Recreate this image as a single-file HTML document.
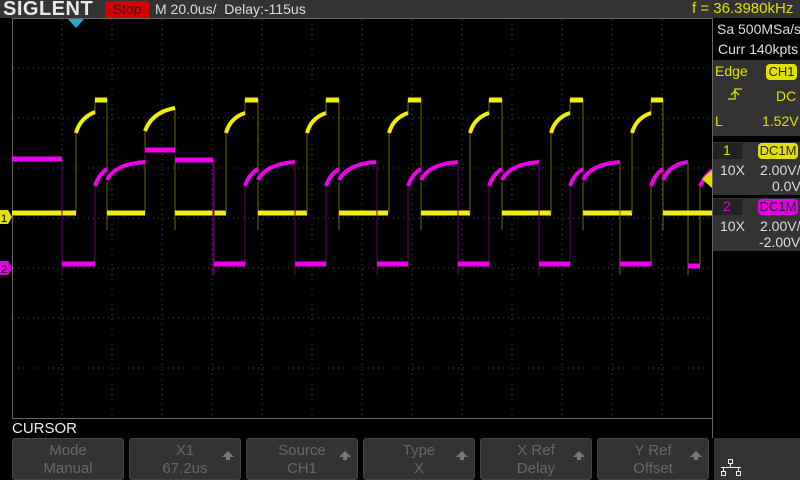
<!DOCTYPE html>
<html><head><meta charset="utf-8"><style>
body{margin:0;width:800px;height:480px;background:#000;overflow:hidden;position:relative;font-family:"Liberation Sans",sans-serif}
.a{position:absolute;white-space:nowrap}
.btn{position:absolute;top:438px;width:112px;height:42px;background:#333;border:1px solid #444;border-radius:3px;box-sizing:border-box;color:#666;font-size:15px;text-align:center;line-height:18px;padding-top:3px}
.up{position:absolute;right:6px;top:12px;width:0;height:0;border-left:6px solid transparent;border-right:6px solid transparent;border-bottom:6px solid #777}
.up:after{content:"";position:absolute;left:-2px;top:5px;width:4px;height:4px;background:#777}
</style></head><body>
<div class="a" style="left:0;top:0;width:800px;height:18px;background:#333"></div>
<div class="a" style="left:3px;top:-2px;font-size:20px;font-weight:bold;color:#e8e8e8;letter-spacing:0.5px">SIGLENT</div>
<div class="a" style="left:105px;top:1px;width:44px;height:17px;background:#d20000;color:#222;font-size:14px;text-align:center;line-height:17px">Stop</div>
<div class="a" style="left:155px;top:0;font-size:14px;color:#ddd;line-height:18px">M 20.0us/&nbsp; Delay:-115us</div>
<div class="a" style="left:692px;top:0;font-size:15px;color:#e0e000;line-height:18px">f = 36.3980kHz</div>

<svg class="a" style="left:0;top:0" width="800" height="480">
<defs>
<g id="cyc" fill="none">
<path d="M0,213V133M19,113V99M32,99V230" stroke="#6a6a00" stroke-width="1"/>
<path d="M0,133Q4,118 19,113" stroke="#f0f000" stroke-width="4"/>
<path d="M19,100H32" stroke="#f0f000" stroke-width="5"/>
<path d="M32,213H81" stroke="#f0f000" stroke-width="5"/>
<path d="M-12,162V275M19,264V184M32,169V182" stroke="#6a006a" stroke-width="1"/>
<path d="M-12,264H19" stroke="#ee00ee" stroke-width="5"/>
<path d="M19,186Q23,174 32,169" stroke="#ee00ee" stroke-width="4"/>
<path d="M32,180Q40,164 69,162" stroke="#ee00ee" stroke-width="4"/>
</g>
</defs>
<g stroke="#4a4a4a" stroke-dasharray="1 4">
<path d="M62,19V418M112,19V418M162,19V418M212,19V418M262,19V418M312,19V418M362,19V418M412,19V418M462,19V418M512,19V418M562,19V418M612,19V418M662,19V418"/>
<path d="M13,68H712M13,118H712M13,168H712M13,218H712M13,268H712M13,318H712M13,368H712"/>
</g>
<rect x="12.5" y="18.5" width="700" height="400" fill="none" stroke="#666"/>
<g fill="none">
<path d="M76,213V133M95,112V99M107,99V230M145,213V131M175,108V230" stroke="#6a6a00"/>
<path d="M12,213H76M107,213H145M175,213H226" stroke="#f0f000" stroke-width="5"/>
<path d="M76,133Q80,118 95,112M145,131Q152,112 175,108" stroke="#f0f000" stroke-width="4"/>
<path d="M95,100H107" stroke="#f0f000" stroke-width="5"/>
<path d="M62,159V275M95,264V184M107,169V182M145,162V148M175,150V162M213,160V275" stroke="#6a006a"/>
<path d="M12,159H62M62,264H95M145,150H175M175,160H213" stroke="#ee00ee" stroke-width="5"/>
<path d="M95,186Q99,174 107,169M107,180Q115,164 145,162" stroke="#ee00ee" stroke-width="4"/>
</g>
<use href="#cyc" x="226"/><use href="#cyc" x="307"/><use href="#cyc" x="389"/><use href="#cyc" x="470"/><use href="#cyc" x="551"/>
<g fill="none">
<path d="M632,213V133M651,113V99M663,99V230M620,162V275M651,264V184M663,169V182M688,162V275M700,264V184" stroke="#6a6a00"/>
<path d="M632,133Q636,118 651,113" stroke="#f0f000" stroke-width="4"/>
<path d="M651,100H663M663,213H712" stroke="#f0f000" stroke-width="5"/>
<path d="M620,264H651M688,266H700" stroke="#ee00ee" stroke-width="5"/>
<path d="M651,186Q655,174 663,169M663,180Q670,164 688,162M700,186Q705,176 712,170" stroke="#ee00ee" stroke-width="4"/>
</g>
<path d="M68,19H84L76,28Z" fill="#1fa8d8"/>
<path d="M0,210H8L12,217L8,224H0Z" fill="#e0e000"/>
<text x="1" y="222" font-size="11" fill="#000" font-family="Liberation Sans">1</text>
<path d="M0,261H8L12,268L8,275H0Z" fill="#e000e0"/>
<text x="1" y="273" font-size="11" fill="#000" font-family="Liberation Sans">2</text>
<path d="M712,170V188L702,179Z" fill="#e0e000"/>
</svg>

<div class="a" style="left:712px;top:19px;width:88px;height:41px;background:#000;border-left:1px solid #666"></div>
<div class="a" style="left:717px;top:21px;font-size:14px;color:#ddd">Sa 500MSa/s</div>
<div class="a" style="left:718px;top:41px;font-size:14px;color:#ddd">Curr 140kpts</div>
<div class="a" style="left:712px;top:60px;width:88px;height:76px;background:#333;border-left:1px solid #666"></div>
<div class="a" style="left:715px;top:63px;font-size:14px;color:#e0e000">Edge</div>
<div class="a" style="left:766px;top:64px;width:31px;height:16px;background:#e0e000;border-radius:4px;color:#222;font-size:13px;text-align:center;line-height:16px">CH1</div>
<svg class="a" style="left:727px;top:86px" width="16" height="16"><path d="M1,13H8V3H15M4,9L8,5L12,9" stroke="#e0e000" stroke-width="1.3" fill="none"/></svg>
<div class="a" style="left:776px;top:88px;font-size:14px;color:#e0e000">DC</div>
<div class="a" style="left:715px;top:113px;font-size:14px;color:#e0e000">L</div>
<div class="a" style="left:762px;top:113px;font-size:14px;color:#e0e000">1.52V</div>
<div class="a" style="left:712px;top:142px;width:88px;height:53px;background:#333;border-left:1px solid #666"></div>
<div class="a" style="left:713px;top:143px;width:29px;height:16px;background:#222"></div>
<div class="a" style="left:723px;top:142px;font-size:14px;color:#e0e000">1</div>
<div class="a" style="left:758px;top:143px;width:40px;height:16px;background:#e0e000;border-radius:4px;color:#222;font-size:13px;text-align:center;line-height:16px">DC1M</div>
<div class="a" style="left:720px;top:162px;font-size:14px;color:#ddd">10X</div>
<div class="a" style="left:760px;top:162px;font-size:14px;color:#ddd">2.00V/</div>
<div class="a" style="left:772px;top:178px;font-size:14px;color:#ddd">0.0V</div>
<div class="a" style="left:712px;top:198px;width:88px;height:53px;background:#333;border-left:1px solid #666"></div>
<div class="a" style="left:713px;top:199px;width:29px;height:16px;background:#222"></div>
<div class="a" style="left:723px;top:198px;font-size:14px;color:#e000e0">2</div>
<div class="a" style="left:758px;top:199px;width:40px;height:16px;background:#e000e0;border-radius:4px;color:#222;font-size:13px;text-align:center;line-height:16px">DC1M</div>
<div class="a" style="left:720px;top:218px;font-size:14px;color:#ddd">10X</div>
<div class="a" style="left:760px;top:218px;font-size:14px;color:#ddd">2.00V/</div>
<div class="a" style="left:759px;top:234px;font-size:14px;color:#ddd">-2.00V</div>
<div class="a" style="left:712px;top:251px;width:1px;height:187px;background:#666"></div>

<div class="a" style="left:12px;top:420px;font-size:15px;color:#eee">CURSOR</div>
<div class="btn" style="left:12px">Mode<br>Manual</div>
<div class="btn" style="left:129px">X1<br>67.2us<span class="up"></span></div>
<div class="btn" style="left:246px">Source<br>CH1<span class="up"></span></div>
<div class="btn" style="left:363px">Type<br>X<span class="up"></span></div>
<div class="btn" style="left:480px">X Ref<br>Delay<span class="up"></span></div>
<div class="btn" style="left:597px">Y Ref<br>Offset<span class="up"></span></div>
<div class="a" style="left:714px;top:438px;width:86px;height:42px;background:#333"></div>
<svg class="a" style="left:720px;top:459px" width="24" height="20"><g stroke="#eee" fill="none" stroke-width="1"><rect x="8.5" y="0.5" width="4" height="4"/><path d="M10.5,5V8M1,8.5H21M3.5,8V12M18.5,8V12"/><rect x="1.5" y="12.5" width="4" height="4"/><rect x="16.5" y="12.5" width="4" height="4"/></g></svg>
</body></html>
